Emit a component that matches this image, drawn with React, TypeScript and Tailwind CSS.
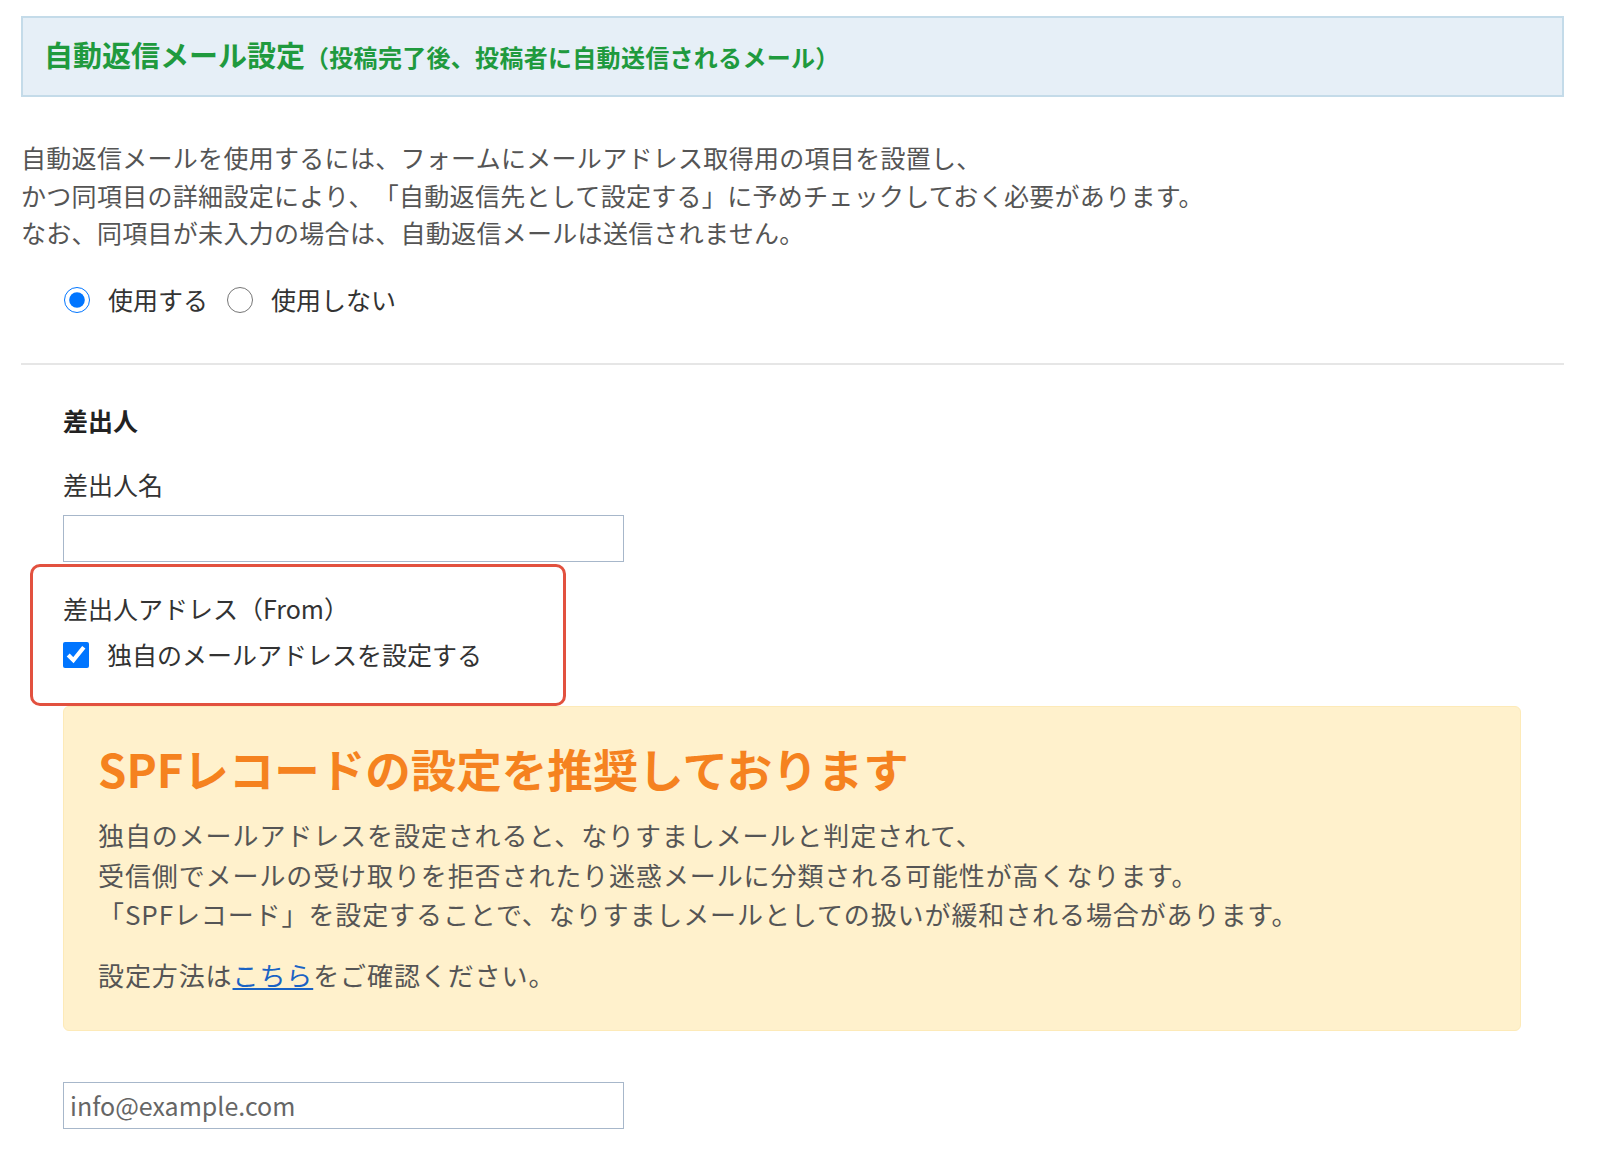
import { useState } from 'react'

const jp = "font-['Noto_Sans_CJK_JP','Noto_Sans',sans-serif]"

export default function App() {
  const [useAuto, setUseAuto] = useState(true)
  const [custom, setCustom] = useState(true)

  return (
    <div className={`${jp} min-h-screen bg-white pl-[21px] pt-[16px] text-[#555] [text-spacing-trim:space-all]`}>
      <div className="w-[1543px]">
        {/* section header */}
        <div className="flex h-[81px] items-center border-2 border-[#c4dbe9] bg-[#e6eff7] pb-[3px] pl-[21px]">
          <h2 className="font-bold text-[#1f9a3e]">
            <span className="text-[29px]">自動返信メール設定</span>
            <span className="text-[24px] tracking-[0.3px]">（投稿完了後、投稿者に自動送信されるメール）</span>
          </h2>
        </div>

        <p className="mt-[42px] text-[25px] leading-[37.5px] tracking-[0.3px] text-[#555]">
          自動返信メールを使用するには、フォームにメールアドレス取得用の項目を設置し、
          <br />
          かつ同項目の詳細設定により、「自動返信先として設定する」に予めチェックしておく必要があります。
          <br />
          なお、同項目が未入力の場合は、自動返信メールは送信されません。
        </p>

        <div className="mt-[29px] flex h-[38px] items-center pl-[43px] text-[25px] text-[#333]">
          <label className="flex items-center">
            <input
              type="radio"
              name="auto"
              checked={useAuto}
              onChange={() => setUseAuto(true)}
              className="m-0 h-[26px] w-[26px] accent-[#0075ff]"
            />
            <span className="ml-[18px]">使用する</span>
          </label>
          <label className="ml-[19px] flex items-center">
            <input
              type="radio"
              name="auto"
              checked={!useAuto}
              onChange={() => setUseAuto(false)}
              className="m-0 h-[26px] w-[26px] accent-[#0075ff]"
            />
            <span className="ml-[18px]">使用しない</span>
          </label>
        </div>

        <hr className="mt-[44px] border-t-2 border-[#e6e6e6]" />

        <div className="pl-[42px]">
          <h3 className="mt-[37px] text-[25px] font-bold leading-[37.5px] text-[#222]">差出人</h3>

          <label className="mt-[27px] block text-[25px] leading-[37.5px] text-[#333]">差出人名</label>
          <input
            type="text"
            className="mt-[11px] block h-[47px] w-[561px] border-[1.5px] border-[#a7b7ca] px-[6px] text-[25px] outline-none"
          />

          {/* highlighted block */}
          <div className="ml-[-33px] mt-[2px] w-[536px] rounded-[10px] border-[3px] border-[#e2513f] pb-[29px] pl-[30px] pt-[23px]">
            <div className="text-[25px] leading-[37.5px] text-[#333]">差出人アドレス（From）</div>
            <label className="mt-[9px] flex h-[38px] items-center text-[25px] text-[#333]">
              <input
                type="checkbox"
                checked={custom}
                onChange={e => setCustom(e.target.checked)}
                className="m-0 h-[26px] w-[26px] accent-[#0075ff]"
              />
              <span className="ml-[18px]">独自のメールアドレスを設定する</span>
            </label>
          </div>

          <div className="w-[1458px] rounded-[6px] border border-[#fdeab8] bg-[#fff1cc] pb-[35px] pl-[34px] pt-[32px]">
            <h4 className="text-[45.5px] font-bold leading-[58px] text-[#f5821f]">
              SPFレコードの設定を推奨しております
            </h4>
            <p className="mt-[18px] text-[26px] leading-[39.7px] tracking-[0.9px] text-[#555]">
              独自のメールアドレスを設定されると、なりすましメールと判定されて、
              <br />
              受信側でメールの受け取りを拒否されたり迷惑メールに分類される可能性が高くなります。
              <br />
              「SPFレコード」を設定することで、なりすましメールとしての扱いが緩和される場合があります。
            </p>
            <p className="mt-[21px] text-[26px] leading-[39.7px] tracking-[0.9px] text-[#555]">
              設定方法は
              <a href="#" className="text-[#1a63c4] underline">
                こちら
              </a>
              をご確認ください。
            </p>
          </div>

          <input
            type="text"
            placeholder="info@example.com"
            className="mb-[36px] mt-[51px] block h-[47px] w-[561px] border-[1.5px] border-[#a7b7ca] px-[6px] text-[25px] text-[#555] outline-none placeholder:text-[#666]"
          />
        </div>
      </div>
    </div>
  )
}
